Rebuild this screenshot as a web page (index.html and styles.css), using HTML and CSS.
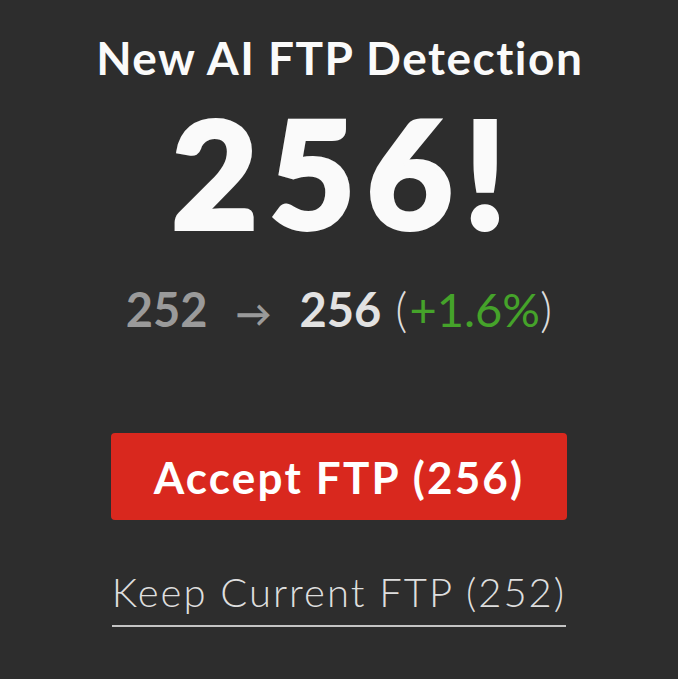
FILE: index.html
```html
<!DOCTYPE html>
<html>
<head>
<meta charset="utf-8">
<link rel="stylesheet" href="styles.css">
</head>
<body>
<main class="panel">
  <h1 class="title">New AI FTP Detection</h1>
  <div class="big">256!</div>
  <div class="compare">
    <span class="old">252</span>
    <span class="arrow">→</span>
    <span class="new">256</span>
    <span class="paren">(</span><span class="pct">+1.6%</span><span class="paren">)</span>
  </div>
  <button class="accept">Accept FTP (256)</button>
  <a class="keep" href="#">Keep Current FTP (252)</a>
</main>
</body>
</html>
```

FILE: styles.css
```css
html, body {
  margin: 0;
  padding: 0;
  background: #2d2d2d;
}
body {
  width: 678px;
  height: 679px;
  overflow: hidden;
  font-family: Lato, "Noto Sans", sans-serif;
}
.panel {
  display: flex;
  flex-direction: column;
  align-items: center;
  padding-top: 35px;
}
.title {
  margin: 0;
  font-size: 46px;
  line-height: 46px;
  font-weight: 700;
  color: #fafafa;
  letter-spacing: 1.5px;
  text-indent: 1.5px;
}
.big {
  margin-top: 16px;
  font-size: 149px;
  line-height: 149px;
  font-weight: 900;
  color: #fafafa;
  -webkit-text-stroke: 4px #fafafa;
  letter-spacing: 11px;
  text-indent: 11px;
}
.compare {
  margin-top: 40px;
  font-size: 47px;
  line-height: 47px;
  display: flex;
  align-items: baseline;
  white-space: pre;
}
.old {
  color: #9a9a9a;
  font-weight: 700;
}
.arrow {
  color: #9a9a9a;
  font-weight: 700;
  margin: 0 28px;
  font-size: 36px;
}
.new {
  color: #e2e2e2;
  font-weight: 700;
  margin-right: 14px;
}
.paren {
  color: #dcdcdc;
  font-weight: 300;
}
.pct {
  color: #45a32a;
  font-weight: 400;
  margin-left: 2px;
}
.accept {
  margin-top: 96px;
  width: 456px;
  height: 87px;
  border: none;
  border-radius: 4px;
  background: #d9281e;
  color: #ffffff;
  font-family: inherit;
  font-size: 44px;
  font-weight: 700;
  letter-spacing: 2.2px;
  display: flex;
  align-items: center;
  justify-content: center;
  padding: 0;
}
.keep {
  margin-top: 52px;
  font-size: 40px;
  line-height: 40px;
  font-weight: 300;
  color: #dedede;
  text-decoration: none;
  letter-spacing: 2px;
  padding-bottom: 13px;
  border-bottom: 2px solid #c4c4c4;
}
```
